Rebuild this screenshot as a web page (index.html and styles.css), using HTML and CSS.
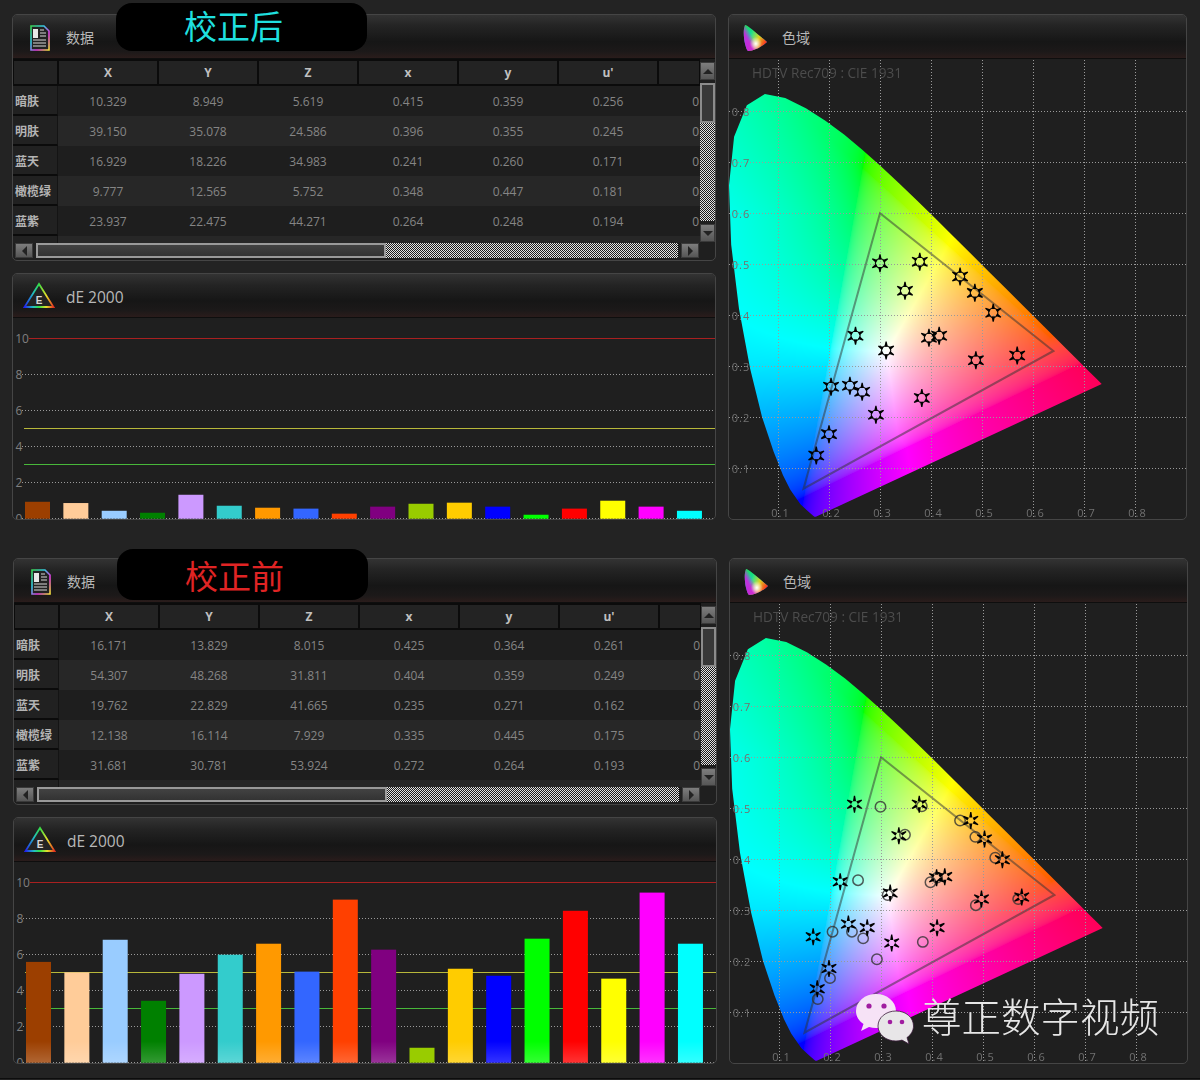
FILE: index.html
```html
<!DOCTYPE html>
<html lang="en">

<head>
    <meta charset="UTF-8">
    <meta name="viewport" content="width=device-width, initial-scale=1.0">
    <title>dE 2000 校正前后</title>
    <link rel="stylesheet" href="styles.css">
</head>

<body>
    <!-- shared header icons -->
    <svg class="icon-defs" width="0" height="0">
        <defs>
            <linearGradient id="doc-edge" x1="0" y1="0" x2="1" y2="1">
                <stop offset="0" stop-color="#39d353" />
                <stop offset="0.35" stop-color="#35c8e8" />
                <stop offset="0.65" stop-color="#e23be0" />
                <stop offset="1" stop-color="#f2e23a" />
            </linearGradient>
            <linearGradient id="tri-edge" x1="0" y1="0" x2="1" y2="0">
                <stop offset="0" stop-color="#2222ee" />
                <stop offset="0.3" stop-color="#22c0c0" />
                <stop offset="0.5" stop-color="#33dd44" />
                <stop offset="0.75" stop-color="#e6e02a" />
                <stop offset="1" stop-color="#e23020" />
            </linearGradient>
            <linearGradient id="gam-a" x1="0.2" y1="0" x2="0.35" y2="1">
                <stop offset="0" stop-color="#19e05a" />
                <stop offset="0.55" stop-color="#10d8c0" />
                <stop offset="1" stop-color="#3020e0" />
            </linearGradient>
            <linearGradient id="gam-b" x1="0.3" y1="0.3" x2="1" y2="0.65">
                <stop offset="0" stop-color="#ffee00" stop-opacity="0" />
                <stop offset="0.5" stop-color="#ffd000" stop-opacity="0.85" />
                <stop offset="1" stop-color="#ff2020" />
            </linearGradient>
            <radialGradient id="gam-c" cx="0.52" cy="0.72" r="0.26">
                <stop offset="0" stop-color="#fff" />
                <stop offset="1" stop-color="#fff" stop-opacity="0" />
            </radialGradient>
            <linearGradient id="gam-d" x1="0.3" y1="1" x2="0.8" y2="0.7">
                <stop offset="0.2" stop-color="#d020e0" stop-opacity="0.9" />
                <stop offset="0.6" stop-color="#d020e0" stop-opacity="0" />
            </linearGradient>
            <symbol id="ico-doc" viewBox="0 0 20 26">
                <path class="doc-sheet" d="M1 1h13l5 5v19H1z" />
                <rect x="3" y="4" width="5" height="9" fill="#e8e8e8" />
                <path class="doc-lines" d="M10 5h4M10 8h6M10 11h6M3 15h13M3 18h13M3 21h13" />
            </symbol>
            <symbol id="ico-gamut" viewBox="0 0 26 28">
                <path d="M3 1C6 1 15 10 25 18c-5 5-13 9-19 9C3 24 0 8 3 1z" fill="url(#gam-a)" />
                <path d="M3 1C6 1 15 10 25 18c-5 5-13 9-19 9C3 24 0 8 3 1z" fill="url(#gam-b)" />
                <path d="M3 1C6 1 15 10 25 18c-5 5-13 9-19 9C3 24 0 8 3 1z" fill="url(#gam-d)" />
                <path d="M3 1C6 1 15 10 25 18c-5 5-13 9-19 9C3 24 0 8 3 1z" fill="url(#gam-c)" />
            </symbol>
            <symbol id="ico-de" viewBox="0 0 32 27">
                <path class="tri-line" d="M16 2L30.500 25H1.500z" />
                <text class="tri-letter" x="16" y="21.500">E</text>
            </symbol>
        </defs>
    </svg>

    <!-- after calibration -->
    <section class="screen">
        <div class="badge badge-after">校正后</div>

        <div class="panel">
            <div class="panel-head">
                <svg class="ico ico-doc"><use href="#ico-doc" /></svg>
                <span class="panel-title">数据</span>
            </div>
            <div class="data-body">
                <div class="table-clip">
                    <table class="data-table">
                        <thead>
                            <tr><th></th><th>X</th><th>Y</th><th>Z</th><th>x</th><th>y</th><th>u'</th><th></th></tr>
                        </thead>
                        <tbody>
                            <tr><th>暗肤</th><td>10.329</td><td>8.949</td><td>5.619</td><td>0.415</td><td>0.359</td><td>0.256</td><td class="cut">0</td></tr>
                            <tr><th>明肤</th><td>39.150</td><td>35.078</td><td>24.586</td><td>0.396</td><td>0.355</td><td>0.245</td><td class="cut">0</td></tr>
                            <tr><th>蓝天</th><td>16.929</td><td>18.226</td><td>34.983</td><td>0.241</td><td>0.260</td><td>0.171</td><td class="cut">0</td></tr>
                            <tr><th>橄榄绿</th><td>9.777</td><td>12.565</td><td>5.752</td><td>0.348</td><td>0.447</td><td>0.181</td><td class="cut">0</td></tr>
                            <tr><th>蓝紫</th><td>23.937</td><td>22.475</td><td>44.271</td><td>0.264</td><td>0.248</td><td>0.194</td><td class="cut">0</td></tr>
                            <tr><th></th><td></td><td></td><td></td><td></td><td></td><td></td><td></td></tr>
                        </tbody>
                    </table>
                </div>
                <div class="vbar">
                    <div class="sb-btn"><i class="arrow-up"></i></div>
                    <div class="vthumb"></div>
                    <div class="sb-track"></div>
                    <div class="sb-btn"><i class="arrow-down"></i></div>
                </div>
                <div class="hbar">
                    <div class="sb-btn"><i class="arrow-left"></i></div>
                    <div class="hthumb"></div>
                    <div class="sb-track"></div>
                    <div class="sb-btn"><i class="arrow-right"></i></div>
                </div>
            </div>
        </div>

        <div class="panel">
            <div class="panel-head">
                <svg class="ico ico-de"><use href="#ico-de" /></svg>
                <span class="panel-title panel-title-de">dE 2000</span>
            </div>
            <svg class="bars" id="bars-after"></svg>
        </div>

        <div class="panel panel-gamut">
            <div class="panel-head">
                <svg class="ico ico-gamut"><use href="#ico-gamut" /></svg>
                <span class="panel-title">色域</span>
            </div>
            <div class="gamut-plot" id="gamut-after">
                <canvas width="457" height="460"></canvas>
                <svg></svg>
            </div>
        </div>
    </section>

    <!-- before calibration -->
    <section class="screen screen-before">
        <div class="badge badge-before">校正前</div>

        <div class="panel">
            <div class="panel-head">
                <svg class="ico ico-doc"><use href="#ico-doc" /></svg>
                <span class="panel-title">数据</span>
            </div>
            <div class="data-body">
                <div class="table-clip">
                    <table class="data-table">
                        <thead>
                            <tr><th></th><th>X</th><th>Y</th><th>Z</th><th>x</th><th>y</th><th>u'</th><th></th></tr>
                        </thead>
                        <tbody>
                            <tr><th>暗肤</th><td>16.171</td><td>13.829</td><td>8.015</td><td>0.425</td><td>0.364</td><td>0.261</td><td class="cut">0</td></tr>
                            <tr><th>明肤</th><td>54.307</td><td>48.268</td><td>31.811</td><td>0.404</td><td>0.359</td><td>0.249</td><td class="cut">0</td></tr>
                            <tr><th>蓝天</th><td>19.762</td><td>22.829</td><td>41.665</td><td>0.235</td><td>0.271</td><td>0.162</td><td class="cut">0</td></tr>
                            <tr><th>橄榄绿</th><td>12.138</td><td>16.114</td><td>7.929</td><td>0.335</td><td>0.445</td><td>0.175</td><td class="cut">0</td></tr>
                            <tr><th>蓝紫</th><td>31.681</td><td>30.781</td><td>53.924</td><td>0.272</td><td>0.264</td><td>0.193</td><td class="cut">0</td></tr>
                            <tr><th></th><td></td><td></td><td></td><td></td><td></td><td></td><td></td></tr>
                        </tbody>
                    </table>
                </div>
                <div class="vbar">
                    <div class="sb-btn"><i class="arrow-up"></i></div>
                    <div class="vthumb"></div>
                    <div class="sb-track"></div>
                    <div class="sb-btn"><i class="arrow-down"></i></div>
                </div>
                <div class="hbar">
                    <div class="sb-btn"><i class="arrow-left"></i></div>
                    <div class="hthumb"></div>
                    <div class="sb-track"></div>
                    <div class="sb-btn"><i class="arrow-right"></i></div>
                </div>
            </div>
        </div>

        <div class="panel">
            <div class="panel-head">
                <svg class="ico ico-de"><use href="#ico-de" /></svg>
                <span class="panel-title panel-title-de">dE 2000</span>
            </div>
            <svg class="bars" id="bars-before"></svg>
        </div>

        <div class="panel panel-gamut">
            <div class="panel-head">
                <svg class="ico ico-gamut"><use href="#ico-gamut" /></svg>
                <span class="panel-title">色域</span>
            </div>
            <div class="gamut-plot" id="gamut-before">
                <canvas width="457" height="460"></canvas>
                <svg></svg>
                <div class="watermark">
                    <svg class="wechat" viewBox="0 0 60 52">
                        <path class="bubble-big" d="M21 1C10 1 1 8.500 1 18c0 5.500 3 10 7.500 13L6 38l8-4c2.300.6 4.600 1 7 1 11 0 20-7.500 20-17S32 1 21 1z" />
                        <circle class="eye" cx="14" cy="13" r="2.600" />
                        <circle class="eye" cx="29" cy="13" r="2.600" />
                        <path class="bubble-small" d="M41 18c-10 0-18 6.500-18 15s8 15 18 15c2 0 4-.3 6-.9l7 3.900-2-6.500c4-2.800 6.500-6.900 6.500-11.500C58.500 24.500 51 18 41 18z" />
                        <circle class="eye" cx="35" cy="29" r="2.300" />
                        <circle class="eye" cx="47" cy="29" r="2.300" />
                    </svg>
                    <span class="watermark-text">尊正数字视频</span>
                </div>
            </div>
        </div>
    </section>

    <div class="page-end"></div>

    <script src="script.js"></script>
</body>

</html>
```

FILE: styles.css
```css
* {
    box-sizing: border-box;
}

html,
body {
    height: 1080px;
    overflow: hidden;
}

body {
    margin: 0;
    padding: 14px 0 0 12px;
    background-color: #232323;
    font-family: "Open Sans", "Noto Sans CJK SC", sans-serif;
    color: #b5b5b5;
}

.icon-defs {
    position: absolute;
}

.screen {
    position: relative;
    display: grid;
    grid-template-columns: 704px 459px;
    grid-template-rows: 247px 247px;
    gap: 12px;
}

.screen-before {
    margin: 38px 0 0 1px;
}

.page-end {
    margin: 14px 0 0 -12px;
    height: 1px;
    background-color: #0d0d0d;
}

/* black title pills */
.badge {
    position: absolute;
    left: 104px;
    width: 251px;
    padding-right: 16px;
    border-radius: 16px;
    background-color: #000;
    font-family: "Noto Sans CJK SC", sans-serif;
    font-size: 33px;
    text-align: center;
    z-index: 2;
}

.badge-after {
    top: -11px;
    height: 48px;
    line-height: 45px;
    color: #1fdfdf;
}

.badge-before {
    top: -9px;
    height: 51px;
    line-height: 52px;
    color: #e02424;
}

/* panels */
.panel {
    border: 1px solid #454545;
    border-radius: 5px;
    background-color: #1f1f1f;
    overflow: hidden;
}

.panel-gamut {
    grid-column: 2;
    grid-row: 1 / span 2;
}

.panel-head {
    display: flex;
    align-items: center;
    height: 44px;
    border-bottom: 1px solid #0e0e0e;
    background: linear-gradient(#333 0, #242424 25%, #161616 62%, #1c1919 85%, #2a1c1b 100%);
}

.panel-title {
    font-size: 14px;
    color: #b8b8b8;
}

.panel-title-de {
    margin: 2px 0 0 1px;
    font-size: 15.500px;
}

.ico {
    display: block;
    flex: none;
}

.ico-doc {
    width: 20px;
    height: 26px;
    margin: 3px 16px 0 17px;
}

.ico-de {
    width: 32px;
    height: 27px;
    margin: 0 10px 0 10px;
}

.ico-gamut {
    width: 26px;
    height: 28px;
    margin: 2px 14px 0 13px;
}

.doc-sheet {
    fill: #222;
    stroke: url(#doc-edge);
    stroke-width: 1.600;
}

.doc-lines {
    fill: none;
    stroke: #d8d8d8;
    stroke-width: 1;
}

.tri-line {
    fill: #232323;
    stroke: url(#tri-edge);
    stroke-width: 1.800;
}

.tri-letter {
    fill: #d8d8d8;
    font-family: "Liberation Sans", sans-serif;
    font-size: 10px;
    font-weight: bold;
    text-anchor: middle;
}

/* data table and its scroll bars */
.data-body {
    display: grid;
    grid-template-columns: 687px 16px;
    grid-template-rows: 184px 17px;
}

.table-clip {
    overflow: hidden;
}

.data-table {
    width: 687px;
    table-layout: fixed;
    border-collapse: separate;
    border-spacing: 0;
    font-size: 12px;
}

.data-table th:first-child {
    width: 45px;
}

.data-table th:last-child {
    width: 42px;
}

.data-table th,
.data-table td {
    padding: 0;
}

.data-table thead th {
    height: 27px;
    border-top: 2px solid #0b0b0b;
    border-bottom: 2px solid #0b0b0b;
    border-left: 1px solid #0b0b0b;
    border-right: 1px solid #0b0b0b;
    background-color: #232323;
    color: #c0c0c0;
    font-weight: bold;
    font-size: 12px;
}

.data-table tbody tr {
    height: 30px;
    background-color: #1e1e1e;
}

.data-table tbody tr:nth-child(even) {
    background-color: #272727;
}

.data-table tbody th {
    height: 30px;
    padding: 2px 0 0 2px;
    border-bottom: 2px solid #0b0b0b;
    border-right: 1px solid #141414;
    background-color: #212121;
    color: #b4b4b4;
    text-align: left;
    font-size: 12px;
    font-weight: bold;
}

.data-table td {
    text-align: center;
    color: #858585;
}

.data-table td.cut {
    padding-right: 1px;
    text-align: right;
}

.vbar {
    display: flex;
    flex-direction: column;
    gap: 3px;
    padding: 3px 1px 1px 0;
}

.hbar {
    grid-column: 1;
    display: flex;
    gap: 3px;
    padding: 0 1px 2px 2px;
}

.sb-btn {
    display: flex;
    flex: none;
    align-items: center;
    justify-content: center;
    width: 15px;
    height: 18px;
    background: linear-gradient(#7d7d7d, #565656);
    border: 1px solid #3a3a3a;
}

.hbar .sb-btn {
    width: 18px;
    height: 15px;
}

.sb-btn i {
    display: block;
    width: 0;
    height: 0;
    border: 5px solid transparent;
}

.arrow-up {
    border-top-width: 0 !important;
    border-bottom-color: #222 !important;
}

.arrow-down {
    border-bottom-width: 0 !important;
    border-top-color: #222 !important;
}

.arrow-left {
    border-left-width: 0 !important;
    border-right-color: #222 !important;
}

.arrow-right {
    border-right-width: 0 !important;
    border-left-color: #222 !important;
}

.vthumb {
    flex: none;
    height: 40px;
    border: 2px solid #8c8c8c;
    background-color: #383838;
    margin-bottom: -3px;
}

.hthumb {
    flex: none;
    width: 350px;
    border: 2px solid #9a9a9a;
    background: linear-gradient(#424242, #333);
    margin-right: -3px;
}

.sb-track {
    flex: 1;
    background: repeating-conic-gradient(#1c1c1c 0 25%, #e2e2e2 0 50%) 0 0 / 2px 2px;
}

/* dE bar chart */
.bars {
    display: block;
    width: 702px;
    height: 202px;
}

.chart-dots {
    stroke: #9a9a9a;
    stroke-width: 1;
    stroke-dasharray: 1 2;
}

.chart-axis {
    fill: #808080;
    font-size: 12px;
    text-anchor: middle;
    dominant-baseline: central;
}

.limit-red {
    stroke: #a82020;
}

.limit-yellow {
    stroke: #b8b83a;
}

.limit-green {
    stroke: #48b83a;
}

/* gamut plot */
.gamut-plot {
    position: relative;
    width: 457px;
    height: 460px;
}

.gamut-plot canvas {
    display: block;
}

.gamut-plot > svg:first-of-type {
    position: absolute;
    left: 0;
    top: 0;
    width: 457px;
    height: 460px;
}

.gamut-name {
    fill: #4c4c4c;
    font-size: 13.600px;
}

.gamut-dots {
    stroke: #9a9a9a;
    stroke-width: 1;
    stroke-dasharray: 1 2;
}

.gamut-axis {
    fill: #707070;
    font-size: 11px;
    letter-spacing: 1px;
    text-anchor: middle;
    dominant-baseline: central;
}

.rec709 {
    fill: none;
    stroke: rgba(50, 50, 50, 0.5);
    stroke-width: 2;
}

.star-ring {
    fill: none;
    stroke: #111;
    stroke-width: 1.200;
}

.ref-ring {
    fill: none;
    stroke: rgba(50, 50, 50, 0.8);
    stroke-width: 1.500;
}

/* logo over the plot */
.watermark {
    position: absolute;
    left: 125px;
    top: 386px;
    display: flex;
    align-items: center;
    gap: 7px;
}

.wechat {
    display: block;
    width: 60px;
    height: 52px;
}

.bubble-big {
    fill: #f6e2f6;
}

.bubble-small {
    fill: #e8e6e8;
    stroke: #3a1a3a;
    stroke-width: 0.800;
}

.eye {
    fill: #a01ca0;
}

.watermark-text {
    margin-bottom: 8px;
    font-family: "Noto Sans CJK SC", sans-serif;
    font-size: 39.500px;
    font-weight: 300;
    line-height: 52px;
    color: #e6e6e6;
    white-space: nowrap;
}
```

FILE: script.js
```js
// dE 2000 per colour patch
const patchColors = ['#9c3f00', '#ffcc99', '#99ccff', '#008000', '#cc99ff', '#33cccc', '#ff9900', '#3366ff', '#ff4000',
    '#800080', '#99cc00', '#ffcc00', '#0000ff', '#00ff00', '#ff0000', '#ffff00', '#ff00ff', '#00ffff']
const deAfter = [0.94, 0.87, 0.44, 0.33, 1.33, 0.72, 0.61, 0.56, 0.28, 0.67, 0.83, 0.89, 0.67, 0.22, 0.56, 1.0, 0.67, 0.44]
const deBefore = [5.6, 5.02, 6.83, 3.44, 4.94, 6, 6.61, 5.06, 9.06, 6.28, 0.83, 5.22, 4.83, 6.89, 8.44, 4.67, 9.45, 6.61]

// measured xy of the patches
const starsAfter = [[.300, .502], [.378, .505], [.457, .476], [.486, .444], [.522, .405], [.349, .448], [.252, .360], [.312, .331],
    [.396, .356], [.416, .360], [.488, .312], [.569, .321], [.204, .260], [.241, .262], [.265, .250], [.292, .205], [.382, .238], [.200, .167], [.175, .125]]
const starsBefore = [[.248, .508], [.375, .508], [.476, .476], [.503, .440], [.538, .399], [.335, .446], [.220, .356], [.318, .334],
    [.409, .364], [.425, .366], [.497, .322], [.576, .326], [.167, .248], [.236, .273], [.273, .266], [.321, .236], [.410, .266], [.198, .186], [.175, .146]]
const rings = [[.299, .503], [.380, .504], [.455, .476], [.485, .444], [.524, .403], [.347, .448], [.255, .359], [.313, .330],
    [.397, .355], [.410, .364], [.486, .310], [.569, .322], [.205, .258], [.243, .258], [.265, .245], [.292, .204], [.382, .238], [.200, .167], [.176, .126]]

// CIE 1931 spectral locus
const locus = [[.1741, .0050], [.1733, .0048], [.1714, .0051], [.1689, .0069], [.1644, .0109], [.1566, .0177], [.1440, .0297], [.1241, .0578],
    [.1096, .0868], [.0913, .1327], [.0687, .2007], [.0454, .2950], [.0235, .4127], [.0082, .5384], [.0039, .6548], [.0139, .7502], [.0389, .8120],
    [.0743, .8338], [.1142, .8262], [.1547, .8059], [.1929, .7816], [.2296, .7543], [.2658, .7243], [.3016, .6923], [.3373, .6589], [.3731, .6245],
    [.4087, .5896], [.4441, .5547], [.4788, .5202], [.5125, .4866], [.5448, .4544], [.5752, .4242], [.6029, .3965], [.6270, .3725], [.6658, .3340],
    [.6915, .3083], [.7079, .2920], [.7190, .2809], [.7260, .2740], [.7347, .2653]]

const clamp01 = v => Math.min(Math.max(v, 0), 1)

function drawBars(id, values) {
    const svg = document.getElementById(id)
    const y = v => 200.7 - 18 * v
    const row = v => Math.floor(y(v)) + 0.5
    let html = `<defs><linearGradient id="${id}-shine" x1="0" y1="0" x2="0" y2="1">
        <stop offset="0" stop-color="#fff" stop-opacity="0"/><stop offset="1" stop-color="#fff" stop-opacity="0.2"/></linearGradient></defs>`

    for (let v = 0; v <= 8; v += 2) {
        html += `<line class="chart-dots" x1="9" x2="701" y1="${row(v)}" y2="${row(v)}"/>`
    }
    html += `<line class="limit-red" x1="16" x2="702" y1="${row(10)}" y2="${row(10)}"/>`
    html += `<line class="limit-yellow" x1="11" x2="702" y1="${row(5)}" y2="${row(5)}"/>`
    html += `<line class="limit-green" x1="11" x2="702" y1="${row(3)}" y2="${row(3)}"/>`
    for (let v = 0; v <= 10; v += 2) {
        html += `<text class="chart-axis" x="${v == 10 ? 9 : 6}" y="${y(v)}">${v}</text>`
    }

    values.forEach((v, i) => {
        const x = 12 + 38.35 * i
        html += `<rect x="${x}" y="${y(v)}" width="25" height="${18 * v}" fill="${patchColors[i]}"/>`
        if (v > 3) {
            html += `<rect x="${x}" y="${y(1.2)}" width="25" height="${18 * 1.2}" fill="url(#${id}-shine)"/>`
        }
    })
    svg.innerHTML = html
}

// inverse of a 3x3 matrix
function invert(m) {
    const [a, b, c, d, e, f, g, h, i] = m
    const A = e * i - f * h, B = f * g - d * i, C = d * h - e * g
    const det = a * A + b * B + c * C
    return [A, c * h - b * i, b * f - c * e, B, a * i - c * g, c * d - a * f, C, b * g - a * h, a * e - b * d].map(n => n / det)
}

// xy to RGB for the wide primaries the plot was rendered with
function makeConverter() {
    const p = [[.690, .305], [.265, .690], [.150, .045]]
    const w = [.3127, .3290]
    const base = [p[0][0] / p[0][1], p[1][0] / p[1][1], p[2][0] / p[2][1], 1, 1, 1,
        (1 - p[0][0] - p[0][1]) / p[0][1], (1 - p[1][0] - p[1][1]) / p[1][1], (1 - p[2][0] - p[2][1]) / p[2][1]]
    const inv = invert(base)
    const wx = w[0] / w[1], wz = (1 - w[0] - w[1]) / w[1]
    const s = [inv[0] * wx + inv[1] + inv[2] * wz, inv[3] * wx + inv[4] + inv[5] * wz, inv[6] * wx + inv[7] + inv[8] * wz]
    const m = invert([base[0] * s[0], base[1] * s[1], base[2] * s[2], s[0], s[1], s[2], base[6] * s[0], base[7] * s[1], base[8] * s[2]])
    return (x, y) => {
        const X = x / y, Z = (1 - x - y) / y
        let r = m[0] * X + m[1] + m[2] * Z
        let g = m[3] * X + m[4] + m[5] * Z
        let b = m[6] * X + m[7] + m[8] * Z
        // the plot runs to spring green past the green corner and to pink past the red one
        if (r < 0) {
            b = Math.max(b, 0) + 0.7 * -r * clamp01((y - 0.3) / 0.3)
        }
        r = Math.max(r, 0); g = Math.max(g, 0); b = Math.max(b, 0)
        if (g < 0.1 * r) {
            b += 0.1 * r * (1 - g / (0.1 * r))
        }
        const top = Math.max(r, g, b)
        return [r, g, b].map(c => 255 * Math.pow(c / top, 1 / 2.2))
    }
}

const toRgb = makeConverter()
const px = x => 510 * x - 2
const py = y => 460.3 - 510 * y

// one black wedge of a marker, wide end inwards
function wedges(inner, outer, base) {
    let html = ''
    for (let a = 0; a < 6; a++) {
        html += `<polygon points="${-base},${-inner} ${base},${-inner} 0.600,${-outer} -0.600,${-outer}" transform="rotate(${a * 60})"/>`
    }
    return html
}

function drawGamut(id, stars, refs) {
    const plot = document.getElementById(id)
    const canvas = plot.querySelector('canvas')
    const ctx = canvas.getContext('2d')
    const img = ctx.createImageData(canvas.width, canvas.height)

    for (let j = 0; j < canvas.height; j++) {
        for (let i = 0; i < canvas.width; i++) {
            const x = (i + 2) / 510, y = (460.3 - j) / 510
            if (y <= 0.001) continue
            const c = toRgb(x, y), k = (j * canvas.width + i) * 4
            img.data[k] = c[0]; img.data[k + 1] = c[1]; img.data[k + 2] = c[2]; img.data[k + 3] = 255
        }
    }
    ctx.putImageData(img, 0, 0)

    // keep only what lies inside the locus
    ctx.globalCompositeOperation = 'destination-in'
    ctx.beginPath()
    locus.forEach(p => ctx.lineTo(px(p[0]), py(p[1])))
    ctx.closePath()
    ctx.fill()

    let html = ''
    for (let n = 1; n <= 8; n++) {
        const vx = Math.floor(px(n / 10)) + 0.5, hy = Math.floor(py(n / 10)) + 0.5
        html += `<line class="gamut-dots" x1="${vx}" x2="${vx}" y1="1" y2="460"/>`
        html += `<line class="gamut-dots" x1="0" x2="457" y1="${hy}" y2="${hy}"/>`
        html += `<text class="gamut-axis" x="12" y="${hy}">0.${n}</text>`
        html += `<text class="gamut-axis" x="${vx + 2}" y="453">0.${n}</text>`
    }
    html += `<text class="gamut-name" x="23" y="19">HDTV Rec709 : CIE 1931</text>`
    html += `<polygon class="rec709" points="${px(.64)},${py(.33)} ${px(.3)},${py(.6)} ${px(.15)},${py(.06)}"/>`

    refs.forEach(p => {
        html += `<circle class="ref-ring" cx="${px(p[0])}" cy="${py(p[1])}" r="5.200"/>`
    })
    stars.forEach(p => {
        html += `<g transform="translate(${px(p[0])} ${py(p[1])})">`
        if (refs.length) {
            html += wedges(3, 8.5, 1.6)
        } else {
            html += `<circle class="star-ring" r="4.600"/>` + wedges(3.8, 9, 1.7)
        }
        html += `</g>`
    })
    plot.querySelector('svg').innerHTML = html
}

drawBars('bars-after', deAfter)
drawBars('bars-before', deBefore)
drawGamut('gamut-after', starsAfter, [])
drawGamut('gamut-before', starsBefore, rings)
```
